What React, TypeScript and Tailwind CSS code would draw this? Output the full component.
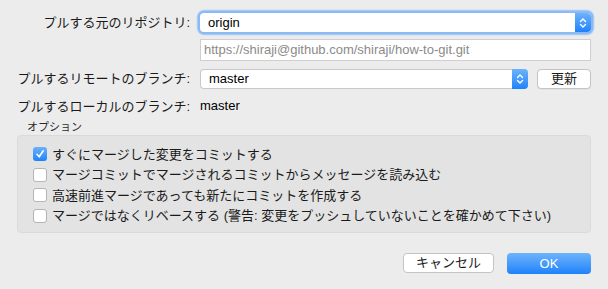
import type { ReactNode } from 'react';

const font = { fontFamily: '"Liberation Sans", "Noto Sans CJK JP", sans-serif' };

function Stepper() {
  return (
    <div className="flex h-full w-[16px] items-center justify-center rounded-r-[4px] bg-gradient-to-b from-[#6cb3fa] to-[#1a82fb]">
      <svg width="8" height="12" viewBox="0 0 8 12" fill="none" stroke="white" strokeWidth="1.4" strokeLinecap="round" strokeLinejoin="round">
        <path d="M1.5 4.5 L4 2 L6.5 4.5" />
        <path d="M1.5 7.5 L4 10 L6.5 7.5" />
      </svg>
    </div>
  );
}

function Row({ label, children }: { label: string; children: ReactNode }) {
  return (
    <div className="flex items-center">
      <div className="w-[190px] shrink-0 text-right text-[13px] text-[#1a1a1a]">{label}</div>
      <div className="ml-[10px] flex-1">{children}</div>
    </div>
  );
}

function Check({ checked, children }: { checked?: boolean; children: ReactNode }) {
  return (
    <div className="flex h-[20.5px] items-center">
      {checked ? (
        <div className="flex h-[14px] w-[14px] items-center justify-center rounded-[3px] bg-gradient-to-b from-[#69b1fa] to-[#1b83fb]">
          <svg width="10" height="10" viewBox="0 0 10 10" fill="none" stroke="white" strokeWidth="1.6" strokeLinecap="round" strokeLinejoin="round">
            <path d="M2 5.3 L4.2 7.8 L8.2 1.8" />
          </svg>
        </div>
      ) : (
        <div className="h-[14px] w-[14px] rounded-[3px] border border-[#b5b5b5] bg-white" />
      )}
      <span className="ml-[5px] text-[13px] text-[#1a1a1a]">{children}</span>
    </div>
  );
}

export default function App() {
  return (
    <div className="h-[289px] w-[608px] bg-[#ececec]" style={font}>
      <div className="flex flex-col pr-[17px] pt-[13px]">
        <Row label="プルする元のリポジトリ:">
          <div className="flex h-[19px] rounded-[4px] bg-white shadow-[0_0_0_2.5px_#8dbaf3,0_0_0_3.5px_#c5dbf6]">
            <div className="flex-1 pl-[8px] text-[13px] leading-[19px] text-black">origin</div>
            <Stepper />
          </div>
        </Row>
        <div className="ml-[200px] mt-[6px] h-[22px] border border-[#cfcfcf] bg-white pl-[3px] text-[13px] leading-[20px] text-[#8a8a8a]">
          https://shiraji@github.com/shiraji/how-to-git.git
        </div>
        <div className="mt-[8px]">
          <Row label="プルするリモートのブランチ:">
            <div className="flex items-center">
              <div className="flex h-[20px] w-[328px] rounded-[4px] border border-r-0 border-[#c8c8c8] bg-white">
                <div className="flex-1 pl-[8px] text-[13px] leading-[18px] text-black">master</div>
                <div className="-my-px h-[20px]">
                  <Stepper />
                </div>
              </div>
              <div className="ml-[9px] flex h-[20px] w-[54px] items-center justify-center rounded-[4px] border border-[#c4c4c4] bg-white text-[13px] text-[#1a1a1a] shadow-[0_0.5px_0.5px_rgba(0,0,0,0.08)]">
                更新
              </div>
            </div>
          </Row>
        </div>
        <div className="mt-[8px]">
          <Row label="プルするローカルのブランチ:">
            <div className="text-[13px] leading-[18px] text-black">master</div>
          </Row>
        </div>
      </div>
      <div className="ml-[27px] mt-[4px] text-[11px] leading-[14px] text-[#2a2a2a]">オプション</div>
      <div className="ml-[17px] mt-[1px] h-[98px] w-[574px] rounded-[4px] border border-[#dadada] bg-[#e3e3e3] pl-[15px] pt-[8px]">
        <Check checked>すぐにマージした変更をコミットする</Check>
        <Check>マージコミットでマージされるコミットからメッセージを読み込む</Check>
        <Check>高速前進マージであっても新たにコミットを作成する</Check>
        <Check>マージではなくリベースする (警告: 変更をプッシュしていないことを確かめて下さい)</Check>
      </div>
      <div className="mr-[17px] mt-[20px] flex justify-end gap-[13px]">
        <div className="flex h-[20px] w-[91px] items-center justify-center rounded-[4px] border border-[#c4c4c4] bg-white text-[13px] text-[#1a1a1a]">
          キャンセル
        </div>
        <div className="flex h-[21px] w-[84px] items-center justify-center rounded-[4px] bg-gradient-to-b from-[#6cb3fa] to-[#1a82fb] text-[13px] text-white">
          OK
        </div>
      </div>
    </div>
  );
}
